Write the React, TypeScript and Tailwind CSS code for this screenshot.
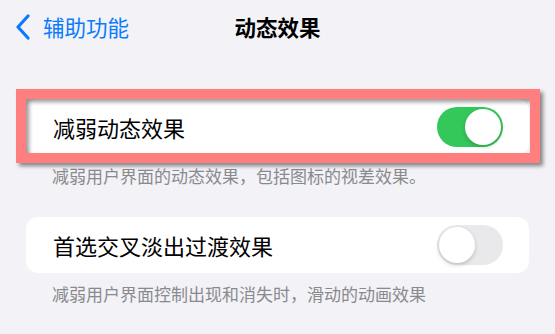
import React from "react";

const Toggle = ({ on }: { on: boolean }) => (
  <div
    className={
      on
        ? "w-[66px] h-[40px] rounded-full bg-[#34c759] p-[2px] flex justify-end"
        : "w-[66px] h-[40px] rounded-full bg-[#e9e9eb] p-[2px] flex justify-start"
    }
  >
    <div className="w-[36px] h-[36px] rounded-full bg-white shadow-[0_2px_4px_rgba(0,0,0,0.18)]" />
  </div>
);

export default function App() {
  const font = {
    fontFamily: '"Noto Sans CJK SC", "Noto Sans", sans-serif',
  };

  return (
    <div
      className="w-[555px] h-[334px] bg-[#f2f2f7] overflow-hidden"
      style={font}
    >
      <div className="relative h-[53px] flex items-center justify-center">
        <div className="absolute left-[15px] top-0 h-full flex items-center gap-[12px] text-[#0a7aff]">
          <svg width="16" height="26" viewBox="0 0 16 26" fill="none">
            <path
              d="M13 2 L3 13 L13 24"
              stroke="currentColor"
              strokeWidth="3.2"
              strokeLinecap="round"
              strokeLinejoin="round"
            />
          </svg>
          <span className="text-[21.5px] leading-none">辅助功能</span>
        </div>
        <span className="text-[21.5px] font-bold leading-none text-black">
          动态效果
        </span>
      </div>

      <div className="px-[26px]">
        <div className="relative mt-[46px]">
          <div className="h-[56px] bg-white rounded-[12px] pl-[27px] pr-[26px] flex items-center justify-between">
            <span className="text-[22px] text-black">减弱动态效果</span>
            <Toggle on />
          </div>
          <div className="absolute left-[-10px] right-[-11px] top-[-10px] bottom-[-8px] border-[10px] border-[#ff7f7f] shadow-[3px_3px_4px_rgba(0,0,0,0.45),inset_3px_3px_4px_rgba(0,0,0,0.4)]" />
        </div>
        <p className="pl-[26px] pt-[9px] text-[17px] leading-[24px] text-[#8a8a8e]">
          减弱用户界面的动态效果，包括图标的视差效果。
        </p>

        <div className="mt-[29px] h-[56px] bg-white rounded-[12px] pl-[27px] pr-[26px] flex items-center justify-between">
          <span className="text-[22px] text-black">首选交叉淡出过渡效果</span>
          <Toggle on={false} />
        </div>
        <p className="pl-[26px] pt-[9px] text-[17px] leading-[24px] text-[#8a8a8e]">
          减弱用户界面控制出现和消失时，滑动的动画效果
        </p>
      </div>
    </div>
  );
}
